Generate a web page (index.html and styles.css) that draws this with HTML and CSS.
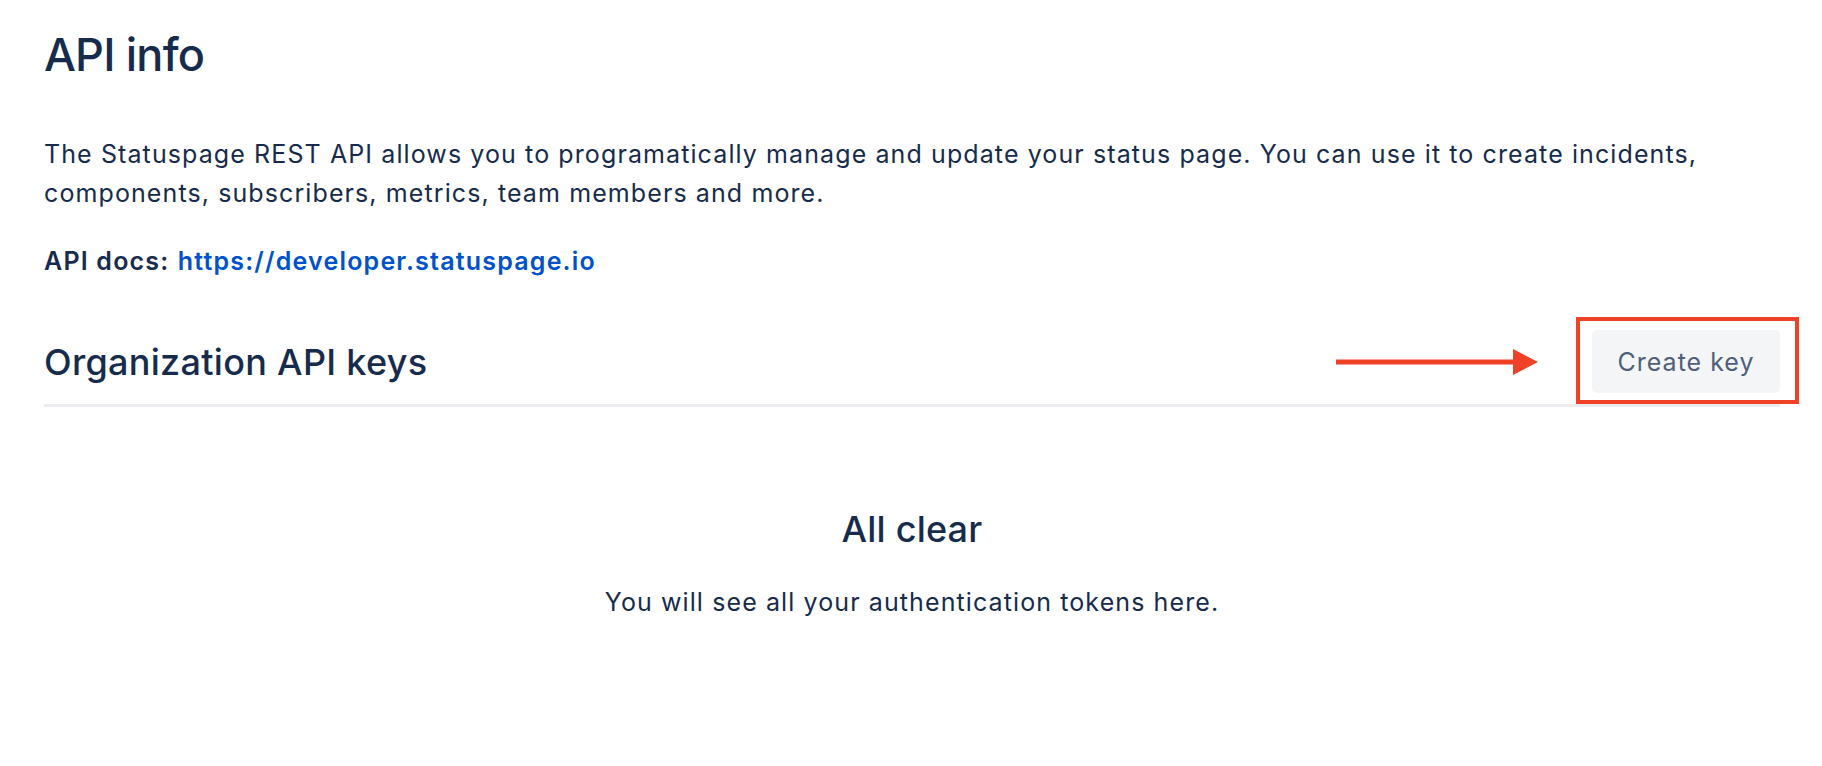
FILE: index.html
```
<!DOCTYPE html>
<html lang="en">
  <head>
    <meta charset="UTF-8" />
    <meta name="viewport" content="width=device-width,initial-scale=1.0" />
    <title>API info</title>
    <link rel="stylesheet" href="styles.css">
  </head>
  <body>
    <div class="page">
      <h1 class="page-title">API info</h1>
      <p class="intro">
        The Statuspage REST API allows you to programatically manage and update your status page. You can use it to create incidents,
        components, subscribers, metrics, team members and more.
      </p>
      <p class="docs">
        <strong>API docs:</strong> <a href="#">https://developer.statuspage.io</a>
      </p>

      <div class="section-header">
        <h2 class="section-title">Organization API keys</h2>
        <svg class="arrow" width="202" height="26" viewBox="0 0 202 26">
          <rect x="0" y="10.5" width="180" height="5" fill="#ee4126" />
          <polygon points="177,0 202,13 177,26" fill="#ee4126" />
        </svg>
        <div class="highlight">
          <button class="btn-create">Create key</button>
        </div>
      </div>

      <div class="empty-state">
        <h3 class="empty-title">All clear</h3>
        <p class="empty-text">You will see all your authentication tokens here.</p>
      </div>
    </div>
  </body>
</html>
```

FILE: styles.css
```
body {
  margin: 0;
  font-family: Inter, "Noto Sans", sans-serif;
  color: #172b4d;
  background: #fff;
}
.page {
  width: 1736px;
  padding: 27px 0 0 44px;
}
.page-title {
  margin: 0;
  font-size: 45px;
  line-height: 56px;
  font-weight: 500;
  letter-spacing: -0.8px;
}
.intro {
  margin: 52px 0 0;
  font-size: 25px;
  line-height: 39px;
  letter-spacing: 1.1px;
}
.docs {
  margin: 29px 0 0;
  font-size: 25px;
  line-height: 39px;
  letter-spacing: 1.2px;
}
.docs strong {
  font-weight: 600;
}
.docs a {
  color: #0052cc;
  font-weight: 600;
  text-decoration: none;
}
.section-header {
  display: flex;
  align-items: center;
  margin-top: 49px;
  padding-bottom: 11px;
  border-bottom: 3px solid #ebecf0;
}
.section-title {
  flex: 1;
  margin: 0;
  font-size: 36px;
  line-height: 44px;
  font-weight: 500;
  letter-spacing: 0.3px;
}
.arrow {
  display: block;
  margin-right: 54px;
}
.highlight {
  position: relative;
}
.highlight::after {
  content: "";
  position: absolute;
  top: -13px;
  left: -16px;
  right: -19px;
  bottom: -11px;
  border: 4.5px solid #ee4126;
  pointer-events: none;
}
.btn-create {
  display: block;
  height: 63px;
  width: 188px;
  padding: 0;
  border: none;
  border-radius: 5px;
  background: #f4f5f7;
  color: #505f79;
  font-family: Inter, "Noto Sans", sans-serif;
  font-size: 25px;
  letter-spacing: 1px;
  cursor: pointer;
}
.empty-state {
  text-align: center;
  padding-top: 100px;
}
.empty-title {
  margin: 0;
  font-size: 36px;
  line-height: 44px;
  font-weight: 500;
  letter-spacing: 0.2px;
}
.empty-text {
  margin: 32px 0 0;
  font-size: 25px;
  line-height: 39px;
  letter-spacing: 1.1px;
}
```
